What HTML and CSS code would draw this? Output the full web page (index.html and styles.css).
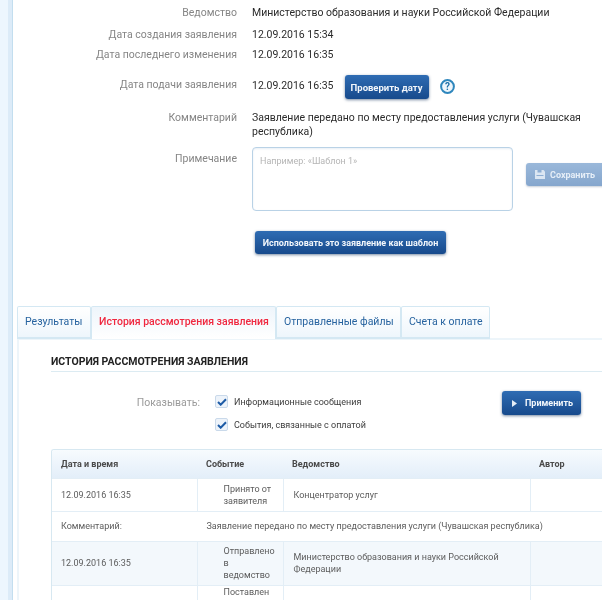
FILE: index.html
```html
<!DOCTYPE html>
<html lang="ru">
<head>
<meta charset="utf-8">
<title>История рассмотрения заявления</title>
<link rel="stylesheet" href="styles.css">
</head>
<body>
<div class="page">
  <div class="sheet">
    <section class="details">
      <div class="row row-dept"><div class="label">Ведомство</div><div class="value">Министерство образования и науки Российской Федерации</div></div>
      <div class="row row-created"><div class="label">Дата создания заявления</div><div class="value">12.09.2016 15:34</div></div>
      <div class="row row-changed"><div class="label">Дата последнего изменения</div><div class="value">12.09.2016 16:35</div></div>
      <div class="row row-submitted">
        <div class="label">Дата подачи заявления</div>
        <div class="value value-date">12.09.2016 16:35</div>
        <button class="btn btn-check" type="button">Проверить дату</button>
        <svg class="help" width="15" height="15" viewBox="0 0 15 15"><circle cx="7.5" cy="7.5" r="6.4" fill="#eef6fc" stroke="#2f87bd" stroke-width="2"/><text x="7.5" y="11" text-anchor="middle" class="help-mark">?</text></svg>
      </div>
      <div class="row row-comment"><div class="label">Комментарий</div><div class="value value-wrap">Заявление передано по месту предоставления услуги (Чувашская республика)</div></div>
      <div class="row row-note">
        <div class="label">Примечание</div>
        <div class="note-box">Например: «Шаблон 1»</div>
        <button class="btn btn-save" type="button">
          <svg width="10" height="9" viewBox="0 0 10 9"><path d="M0 0h8.5L10 1.5V9H0z" fill="#dbe6f2"/><path d="M2.5 0h4v2.5h-4zM1.5 5h7v1h-7z" fill="#8eaed3"/></svg>
          Сохранить
        </button>
      </div>
      <div class="template-row"><button class="btn btn-template" type="button">Использовать это заявление как шаблон</button></div>
    </section>

    <nav class="tabs">
      <a class="tab tab-results">Результаты</a>
      <a class="tab tab-active">История рассмотрения заявления</a>
      <a class="tab tab-files">Отправленные файлы</a>
      <a class="tab tab-bills">Счета к оплате</a>
    </nav>

    <section class="panel">
      <h2 class="panel-title">ИСТОРИЯ РАССМОТРЕНИЯ ЗАЯВЛЕНИЯ</h2>
      <div class="filter">
        <div class="filter-label">Показывать:</div>
        <div class="checks">
          <div class="check"><span class="box"><svg width="10" height="8" viewBox="0 0 10 8"><path d="M1 4l2.7 2.7L9 1.2" fill="none" stroke="#1d5ba6" stroke-width="2"/></svg></span>Информационные сообщения</div>
          <div class="check"><span class="box"><svg width="10" height="8" viewBox="0 0 10 8"><path d="M1 4l2.7 2.7L9 1.2" fill="none" stroke="#1d5ba6" stroke-width="2"/></svg></span>События, связанные с оплатой</div>
        </div>
        <button class="btn btn-apply" type="button"><svg width="5" height="7" viewBox="0 0 5 7"><path d="M0 0l5 3.5L0 7z" fill="#e6eef7"/></svg>Применить</button>
      </div>
      <div class="table-wrap">
        <table class="history">
          <colgroup><col class="c-date"><col class="c-event"><col class="c-dept"><col class="c-author"></colgroup>
          <thead><tr><th>Дата и время</th><th>Событие</th><th>Ведомство</th><th>Автор</th></tr></thead>
          <tbody>
            <tr class="r1"><td>12.09.2016 16:35</td><td class="event">Принято от заявителя</td><td>Концентратор услуг</td><td></td></tr>
            <tr class="r2"><td>Комментарий:</td><td colspan="3">Заявление передано по месту предоставления услуги (Чувашская республика)</td></tr>
            <tr class="r3"><td>12.09.2016 16:35</td><td class="event">Отправлено в ведомство</td><td>Министерство образования и науки Российской Федерации</td><td></td></tr>
            <tr class="r4"><td></td><td class="event">Поставлен</td><td></td><td></td></tr>
          </tbody>
        </table>
      </div>
    </section>
  </div>
</div>
</body>
</html>
```
FILE: styles.css
```css
* { box-sizing: border-box; }
html, body { margin: 0; height: 600px; overflow: hidden; background: #fff; }
body { font-family: Roboto, "Liberation Sans", sans-serif; font-size: 10.5px; color: #2b2b2b; }
.page { height: 600px; padding-left: 8px; background: #edf6fe; filter: blur(.35px); }
.sheet { height: 600px; padding-left: 5px; background: #fff; border-left: 4px solid #dcebf8; box-shadow: inset 1px 0 0 #c3deef; overflow: hidden; }

.details { height: 306px; }
.row { display: flex; align-items: flex-start; }
.label { width: 220px; flex: none; text-align: right; color: #858585; line-height: 14px; }
.value { margin-left: 15px; line-height: 14px; color: #2b2b2b; }
.value-wrap { width: 335px; }
.row-dept { padding-top: 6px; }
.row-created { padding-top: 8px; }
.row-changed { padding-top: 6px; }
.row-submitted { margin-top: 13px; height: 26px; }
.row-submitted .label { margin-top: 3px; }
.value-date { margin-top: 4px; }
.row-comment { margin-top: 10px; }
.row-note { margin-top: 8px; }
.row-note .label { margin-top: 5px; }

.btn { font-family: inherit; font-weight: 700; font-size: 9px; color: #f2f6fb; border: 0; border-radius: 3px; background: linear-gradient(#2f6cb3, #174a8c); box-shadow: 0 1px 3px rgba(30, 60, 100, .6); padding: 0; display: flex; align-items: center; justify-content: center; flex: none; }
.btn-check { width: 84px; height: 24px; margin-left: 11px; font-size: 9.5px; }
.help { margin: 4px 0 0 11px; flex: none; }
.help-mark { font: 700 10px Roboto, sans-serif; fill: #1d6fa8; }
.note-box { width: 261px; height: 64px; margin-left: 15px; border: 1px solid #b9d2e6; border-radius: 4px; padding: 7px; font-size: 9px; line-height: 12px; color: #b5b5b5; box-shadow: inset 0 1px 2px rgba(120, 160, 200, .18); flex: none; }
.btn-save { width: 80px; height: 23px; margin: 16px 0 0 13px; padding-left: 9px; gap: 5px; justify-content: flex-start; background: linear-gradient(#9ab8da, #85a6cd); color: #e6eef7; box-shadow: 0 1px 2px rgba(30, 60, 100, .25); }
.template-row { padding: 20px 0 0 238px; }
.btn-template { width: 191px; height: 23px; }

.tabs { display: flex; height: 33px; }
.tab { height: 33px; padding: 0 7px; line-height: 29px; color: #27639f; background: linear-gradient(#fff, #eef6fc); border: 1px solid #d4e8f3; border-bottom: 2px solid #d4e8f3; border-radius: 2px 2px 0 0; white-space: nowrap; }
.tab-results { width: 74px; }
.tab-active { width: 185px; color: #f0283f; font-weight: 500; background: linear-gradient(#eef5fb, #fff); border-bottom: 0; }
.tab-files { width: 125px; }
.tab-bills { width: 89px; }

.panel { border-left: 2px solid #edf5fa; border-top: 2px solid #edf5fa; padding-left: 32px; height: 262px; margin-top: -1px; }
.panel-title { margin: 15px 0 0; font-size: 10.5px; line-height: 14px; font-weight: 700; color: #222; height: 17px; border-bottom: 1px solid #dcebf2; }
.filter { position: relative; height: 77px; display: flex; }
.filter-label { width: 149px; text-align: right; padding-top: 24px; line-height: 14px; color: #9a9a9a; flex: none; }
.checks { margin-left: 15px; padding-top: 23px; }
.check { display: flex; align-items: center; height: 13px; margin-bottom: 10px; font-size: 9px; color: #3c3c3c; gap: 6px; }
.box { width: 13px; height: 13px; border: 1px solid #c9d9ea; border-radius: 2px; background: #edf3fa; display: flex; align-items: center; justify-content: center; flex: none; }
.btn-apply { position: absolute; left: 451px; top: 19px; width: 79px; height: 24px; gap: 8px; padding-left: 2px; }

.table-wrap { width: 570px; border: 1px solid #d7e8f1; border-right: 0; border-bottom: 0; border-radius: 3px 0 0 0; overflow: hidden; }
.history { width: 660px; border-collapse: collapse; table-layout: fixed; font-size: 9px; line-height: 12px; color: #5c5c5c; }
.c-date { width: 145px; }
.c-event { width: 86px; }
.c-dept { width: 247px; }
.c-author { width: 182px; }
.history th { height: 28px; padding: 0 9px; text-align: left; font-weight: 700; color: #4a4a4a; background: linear-gradient(#f7fbfe, #e3eef9); }
.history td { padding: 0 9px 0 10px; border: 1px solid #e3eef6; }
.history td:first-child { border-left: 0; padding-left: 9px; }
.history td.event { padding: 0 8px 0 26px; }
.r1 td { height: 33px; }
.r2 td { height: 30px; border-left-color: transparent; border-right-color: transparent; }
.r2 td:last-child { padding-left: 9px; }
.r3 td { height: 44px; background: #f3f8fc; }
.r4 td { height: 44px; vertical-align: top; padding-top: 4px; }
```
